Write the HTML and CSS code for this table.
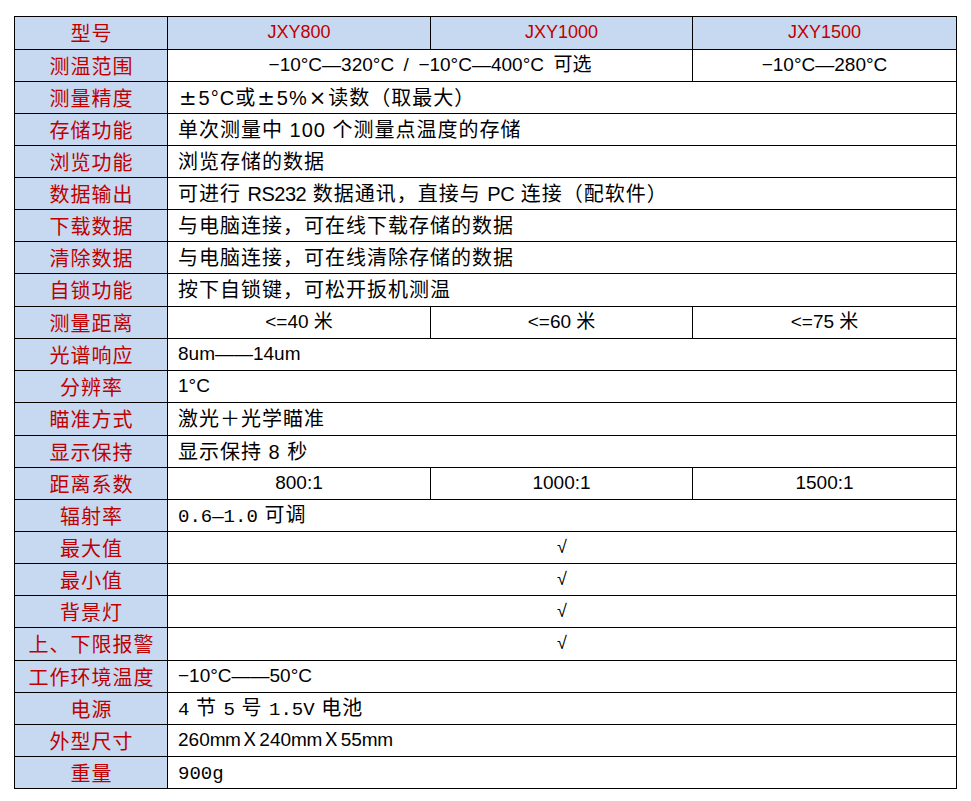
FILE: index.html
```html
<!DOCTYPE html>
<html lang="zh-CN">
<head>
<meta charset="utf-8">
<title>红外测温仪参数</title>
<link rel="stylesheet" href="styles.css">
</head>
<body>
<table class="spec">
  <colgroup>
    <col class="c-label">
    <col class="c-a">
    <col class="c-b">
    <col class="c-c">
  </colgroup>
  <tbody>
    <tr class="head tall">
      <th class="label">型号</th>
      <th class="model">JXY800</th>
      <th class="model">JXY1000</th>
      <th class="model">JXY1500</th>
    </tr>
    <tr>
      <th class="label">测温范围</th>
      <td class="num center" colspan="2">−10°C—320°C&ensp;/&ensp;−10°C—400°C&ensp;可选</td>
      <td class="num center">−10°C—280°C</td>
    </tr>
    <tr>
      <th class="label">测量精度</th>
      <td class="txt" colspan="3"><span class="sym">±</span>5°C或<span class="sym">±</span>5%<span class="sym">×</span>读数（取最大）</td>
    </tr>
    <tr>
      <th class="label">存储功能</th>
      <td class="txt" colspan="3">单次测量中 100 个测量点温度的存储</td>
    </tr>
    <tr>
      <th class="label">浏览功能</th>
      <td class="txt" colspan="3">浏览存储的数据</td>
    </tr>
    <tr>
      <th class="label">数据输出</th>
      <td class="txt" colspan="3">可进行 <span class="narrow">RS232</span> 数据通讯，直接与 <span class="narrow">PC</span> 连接（配软件）</td>
    </tr>
    <tr>
      <th class="label">下载数据</th>
      <td class="txt" colspan="3">与电脑连接，可在线下载存储的数据</td>
    </tr>
    <tr>
      <th class="label">清除数据</th>
      <td class="txt" colspan="3">与电脑连接，可在线清除存储的数据</td>
    </tr>
    <tr class="tall">
      <th class="label">自锁功能</th>
      <td class="txt" colspan="3">按下自锁键，可松开扳机测温</td>
    </tr>
    <tr>
      <th class="label">测量距离</th>
      <td class="num center">&lt;=40 米</td>
      <td class="num center">&lt;=60 米</td>
      <td class="num center">&lt;=75 米</td>
    </tr>
    <tr>
      <th class="label">光谱响应</th>
      <td class="num" colspan="3">8um——14um</td>
    </tr>
    <tr>
      <th class="label">分辨率</th>
      <td class="num" colspan="3">1°C</td>
    </tr>
    <tr class="tall">
      <th class="label">瞄准方式</th>
      <td class="txt" colspan="3">激光＋光学瞄准</td>
    </tr>
    <tr>
      <th class="label">显示保持</th>
      <td class="txt" colspan="3">显示保持 8 秒</td>
    </tr>
    <tr>
      <th class="label">距离系数</th>
      <td class="num center">800:1</td>
      <td class="num center">1000:1</td>
      <td class="num center">1500:1</td>
    </tr>
    <tr>
      <th class="label">辐射率</th>
      <td class="txt" colspan="3"><span class="mono">0.6—1.0</span> 可调</td>
    </tr>
    <tr>
      <th class="label">最大值</th>
      <td class="num center check" colspan="3">√</td>
    </tr>
    <tr>
      <th class="label">最小值</th>
      <td class="num center check" colspan="3">√</td>
    </tr>
    <tr>
      <th class="label">背景灯</th>
      <td class="num center check" colspan="3">√</td>
    </tr>
    <tr class="tall">
      <th class="label">上、下限报警</th>
      <td class="num center check" colspan="3">√</td>
    </tr>
    <tr>
      <th class="label">工作环境温度</th>
      <td class="num" colspan="3">−10°C——50°C</td>
    </tr>
    <tr>
      <th class="label">电源</th>
      <td class="txt" colspan="3"><span class="mono">4</span> 节 <span class="mono">5</span> 号 <span class="mono">1.5V</span> 电池</td>
    </tr>
    <tr>
      <th class="label">外型尺寸</th>
      <td class="num" colspan="3">260<span class="narrow">mm</span>Ｘ240<span class="narrow">mm</span>Ｘ55<span class="narrow">mm</span></td>
    </tr>
    <tr>
      <th class="label">重量</th>
      <td class="txt" colspan="3"><span class="mono">900g</span></td>
    </tr>
  </tbody>
</table>
</body>
</html>
```
FILE: styles.css
```css
html, body {
  margin: 0;
  padding: 0;
  background: #ffffff;
}

body {
  font-family: "Liberation Sans", "Noto Sans CJK SC", sans-serif;
  color: #000;
}

.spec {
  margin: 16px 0 0 14px;
  width: 942px;
  table-layout: fixed;
  border-collapse: collapse;
}

.c-label { width: 153px; }
.c-a { width: 263px; }
.c-b { width: 262px; }
.c-c { width: 264px; }

.spec tr {
  height: 32px;
}

.spec tr.tall {
  height: 33px;
}

.spec th,
.spec td {
  border: 1px solid #000;
  padding: 0 0 0 10px;
  vertical-align: middle;
  line-height: 1.2;
  white-space: nowrap;
  text-align: left;
  font-weight: normal;
}

.spec th.label {
  background: #c6d9f1;
  color: #c00000;
  font-family: "Noto Sans CJK SC", sans-serif;
  font-size: 20px;
  letter-spacing: 1px;
  text-align: center;
  padding: 0 0 0 1px;
}

.head th.model {
  background: #c6d9f1;
  color: #c00000;
  font-family: "Liberation Sans", sans-serif;
  font-size: 18px;
  text-align: center;
  padding: 0;
}

.txt {
  font-size: 20px;
  letter-spacing: 1px;
}

.num {
  font-size: 19px;
  letter-spacing: 0;
}

.spec td.center {
  text-align: center;
  padding: 0;
}

.check {
  font-size: 18px;
}

.mono {
  font-family: "Liberation Mono", monospace;
  font-size: 19px;
  letter-spacing: 0;
}

.sym {
  font-family: "DejaVu Sans", sans-serif;
  font-size: 21px;
  line-height: 1;
  margin: 0 1px;
}

.narrow {
  letter-spacing: -0.5px;
}
```
